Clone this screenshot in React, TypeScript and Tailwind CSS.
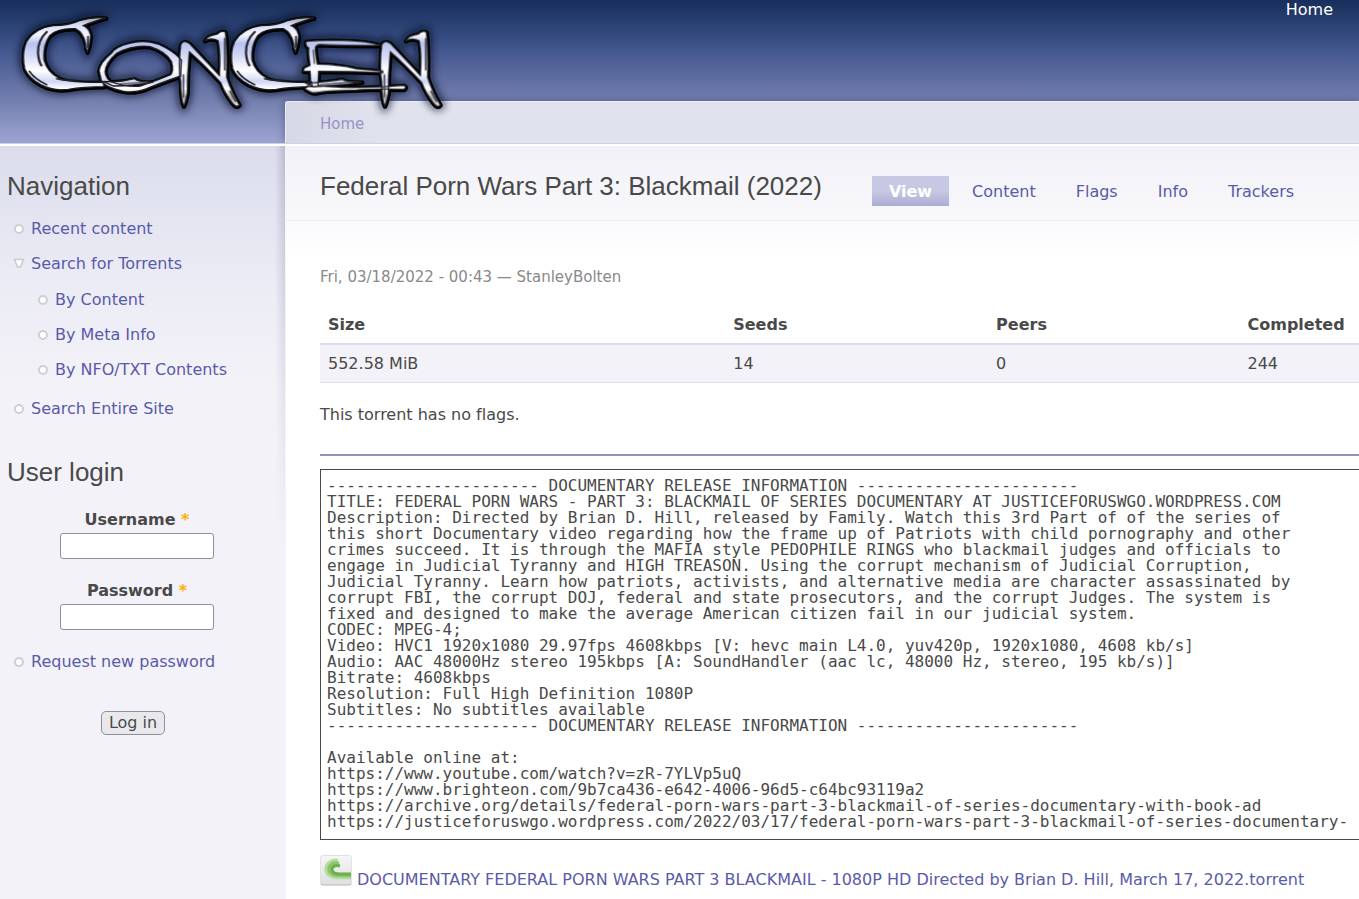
import React from "react";

const RELEASE_NOTES = `---------------------- DOCUMENTARY RELEASE INFORMATION -----------------------
TITLE: FEDERAL PORN WARS - PART 3: BLACKMAIL OF SERIES DOCUMENTARY AT JUSTICEFORUSWGO.WORDPRESS.COM
Description: Directed by Brian D. Hill, released by Family. Watch this 3rd Part of of the series of
this short Documentary video regarding how the frame up of Patriots with child pornography and other
crimes succeed. It is through the MAFIA style PEDOPHILE RINGS who blackmail judges and officials to
engage in Judicial Tyranny and HIGH TREASON. Using the corrupt mechanism of Judicial Corruption,
Judicial Tyranny. Learn how patriots, activists, and alternative media are character assassinated by
corrupt FBI, the corrupt DOJ, federal and state prosecutors, and the corrupt Judges. The system is
fixed and designed to make the average American citizen fail in our judicial system.
CODEC: MPEG-4;
Video: HVC1 1920x1080 29.97fps 4608kbps [V: hevc main L4.0, yuv420p, 1920x1080, 4608 kb/s]
Audio: AAC 48000Hz stereo 195kbps [A: SoundHandler (aac lc, 48000 Hz, stereo, 195 kb/s)]
Bitrate: 4608kbps
Resolution: Full High Definition 1080P
Subtitles: No subtitles available
---------------------- DOCUMENTARY RELEASE INFORMATION -----------------------

Available online at:
https://www.youtube.com/watch?v=zR-7YLVp5uQ
https://www.brighteon.com/9b7ca436-e642-4006-96d5-c64bc93119a2
https://archive.org/details/federal-porn-wars-part-3-blackmail-of-series-documentary-with-book-ad
https://justiceforuswgo.wordpress.com/2022/03/17/federal-porn-wars-part-3-blackmail-of-series-documentary-`;

function Logo() {
  return (
    <svg viewBox="0 0 1380 360" className="h-[120px] w-[460px]" role="img" aria-label="ConCen">
      <defs>
        <path
          id="crescent"
          d="M318 54 Q275 66 250 77 Q268 84 272 108 Q270 135 262 156 Q256 146 256 130 Q250 98 226 86 Q170 84 148 108 Q128 138 132 180 Q142 216 176 234 Q210 250 310 246 L312 260 Q250 260 205 268 Q160 274 122 254 Q86 234 74 206 Q64 160 80 124 Q105 84 160 77 Q210 76 238 62 Q280 50 318 54Z"
        />
        <path
          id="blade"
          d="M542 134 Q550 118 568 130 Q615 180 658 226 Q662 160 654 122 Q634 112 614 122 Q622 106 652 102 Q664 90 676 96 Q682 140 680 232 Q696 280 718 314 Q710 326 696 308 Q674 280 662 248 Q606 188 568 156 Q562 220 562 280 Q556 310 551 318 Q542 300 542 250 Q534 200 542 134Z"
        />
        <g id="mark">
          <use href="#crescent" />
          <path
            fillRule="evenodd"
            d="M297 212 Q300 188 334 160 Q346 140 388 130 Q430 118 474 132 Q520 152 544 180 L542 228 Q480 250 440 266 Q400 280 370 274 Q315 262 304 242Z M315 216 Q316 190 350 160 Q400 134 450 140 Q496 154 514 184 Q522 212 512 224 Q470 242 420 258 Q380 262 330 244 Q318 234 315 216Z"
          />
          <path d="M310 244 Q360 248 404 236 Q410 246 460 246 Q400 258 340 258Z" />
          <use href="#blade" />
          <use href="#crescent" x="624" />
          <path d="M918 124 Q1000 118 1080 124 Q1120 128 1142 136 Q1080 138 960 134 Q944 134 946 150 Q948 172 952 192 Q1010 192 1070 206 L1148 213 L1148 218 Q1040 214 956 214 L954 256 Q1010 264 1080 262 Q1150 262 1212 256 Q1222 260 1212 268 Q1120 266 1070 270 Q980 272 950 278 Q936 282 914 266 L932 250 L930 214 L910 214 L912 204 L930 196 Q924 160 926 144 Q914 136 918 124Z" />
          <path d="M920 250 Q980 246 1028 238 Q1036 246 1086 246 Q1040 254 940 260Z" />
          <use href="#blade" x="603" />
        </g>
        <linearGradient id="chrome" gradientUnits="userSpaceOnUse" x1="0" y1="50" x2="0" y2="320">
          <stop offset="0" stopColor="#999" />
          <stop offset="0.08" stopColor="#d5daf6" />
          <stop offset="0.2" stopColor="#f6f6fb" />
          <stop offset="0.3" stopColor="#b9c3f0" />
          <stop offset="0.44" stopColor="#d5daf6" />
          <stop offset="0.6" stopColor="#ffffff" />
          <stop offset="0.72" stopColor="#d0d7f4" />
          <stop offset="0.8" stopColor="#ffffff" />
          <stop offset="0.9" stopColor="#a9a9ad" />
          <stop offset="1" stopColor="#f2f2f2" />
        </linearGradient>
        <filter id="glow" x="-10%" y="-20%" width="120%" height="140%">
          <feGaussianBlur stdDeviation="12" />
        </filter>
        <filter id="soft" x="-5%" y="-5%" width="110%" height="110%">
          <feGaussianBlur stdDeviation="2.2" />
        </filter>
      </defs>
      <use href="#mark" fill="#060b1c" stroke="#060b1c" strokeWidth="24" opacity="0.75" filter="url(#glow)" />
      <use href="#mark" fill="#000" stroke="#000" strokeWidth="13" strokeLinejoin="round" x="1" y="2" />
      <use href="#mark" fill="url(#chrome)" />
      <g filter="url(#soft)" fill="none" strokeLinecap="round">
        <use href="#mark" fill="none" stroke="#1c1c22" strokeWidth="4" />
        <g id="shade" stroke="#26262c">
          <path d="M140 96 Q112 122 114 160 Q116 184 124 196" strokeWidth="7" />
          <path d="M88 214 Q104 238 140 254" strokeWidth="5" />
          <path d="M170 236 Q194 244 228 240" strokeWidth="5" />
          <path d="M264 110 L263 142" strokeWidth="5" />
        </g>
        <use href="#shade" x="624" />
        <g id="edge" stroke="#4a4a52" strokeWidth="5">
          <path d="M550 225 L550 290 M674 116 L674 210 M690 274 L706 304" />
        </g>
        <use href="#edge" x="603" />
        <path d="M360 252 L440 247 M940 150 L943 190 M962 254 L1050 247" stroke="#4a4a52" strokeWidth="4" />
      </g>
    </svg>
  );
}

function Dot() {
  return <span className="size-[10px] shrink-0 rounded-full border-2 border-[#cfcfd1] bg-white" />;
}

function Triangle() {
  return (
    <svg viewBox="0 0 12 11" className="-ml-px h-[11px] w-3 shrink-0" aria-hidden="true">
      <path d="M1.500 1.500H10.500L7.500 9H4.500Z" fill="#fff" stroke="#cbcbcb" strokeWidth="1.600" strokeLinejoin="round" />
    </svg>
  );
}

function NavLink({ label, open = false }: { label: string; open?: boolean }) {
  return (
    <div className="flex h-[35px] items-center">
      <span className="flex w-[17px] shrink-0 items-center">{open ? <Triangle /> : <Dot />}</span>
      <a href="#" className="whitespace-nowrap text-[#5a5aaa]">
        {label}
      </a>
    </div>
  );
}

function Field({ id, label, type }: { id: string; label: string; type: string }) {
  return (
    <div className="flex flex-col items-center">
      <label htmlFor={id} className="font-bold leading-5">
        {label} <span className="text-[#ffae00]">*</span>
      </label>
      <input
        id={id}
        type={type}
        className="mt-[3px] h-[26px] w-[154px] rounded-[3px] border border-[#8f8f9d] bg-white px-1"
      />
    </div>
  );
}

const HEADING = "font-['Liberation_Sans',sans-serif] text-[26px] leading-8";

function Sidebar() {
  return (
    <aside className="relative w-[285px] shrink-0 bg-[#f3f2f8] bg-[linear-gradient(#dbdceb,#dddfed_20px,#ebebf5_130px,#f3f2f8_240px)] bg-no-repeat pl-[7px] pt-6">
      <div className="absolute right-0 top-0 h-[400px] w-2.5 bg-[linear-gradient(to_right,transparent,#77779a55)] [mask-image:linear-gradient(black,transparent)]" />
      <nav aria-labelledby="nav-title">
        <h2 id="nav-title" className={HEADING}>Navigation</h2>
        <ul className="mt-[9px] pl-[7px]">
          <li><NavLink label="Recent content" /></li>
          <li>
            <NavLink label="Search for Torrents" open />
            <ul className="mb-1 mt-px pl-6">
              <li><NavLink label="By Content" /></li>
              <li><NavLink label="By Meta Info" /></li>
              <li><NavLink label="By NFO/TXT Contents" /></li>
            </ul>
          </li>
          <li><NavLink label="Search Entire Site" /></li>
        </ul>
      </nav>
      <section className="mt-[30px]">
        <h2 className={HEADING}>User login</h2>
        <form onSubmit={(e) => e.preventDefault()}>
          <div className="mt-[22px] flex flex-col gap-[22px] pr-[18px]">
            <Field id="username" label="Username" type="text" />
            <Field id="password" label="Password" type="password" />
          </div>
          <div className="mt-[14px] pl-[7px]">
            <NavLink label="Request new password" />
          </div>
          <div className="mt-8 flex justify-center pr-[26px]">
            <button className="h-6 rounded-[5px] border border-[#8f8f9d] bg-[#e9e9ed] px-[7px] leading-5">Log in</button>
          </div>
        </form>
      </section>
    </aside>
  );
}

const TABS = ["Content", "Flags", "Info", "Trackers"];

function TorrentIcon() {
  return (
    <svg viewBox="0 0 32 32" className="size-8 shrink-0" aria-hidden="true">
      <defs>
        <linearGradient id="tile" x1="0" y1="0" x2="0" y2="1">
          <stop offset="0" stopColor="#f6f6f6" />
          <stop offset="1" stopColor="#e0e0e0" />
        </linearGradient>
      </defs>
      <rect x="0.500" y="1.500" width="31" height="29" rx="2.500" fill="#b5b5b5" />
      <rect x="0.500" y="0.500" width="31" height="28.500" rx="2.500" fill="url(#tile)" stroke="#e2e2e2" />
      <g fill="none">
        <path d="M18 5.500C10.500 4.500 6 9 6 14C6 19.500 11 22.500 17 22.500H31" stroke="#b5dca0" strokeWidth="3.500" />
        <path d="M19 8.500C13 7 9 10 9 14C9 18 13 20.500 18 20.500H31" stroke="#8bc56c" strokeWidth="3.500" />
        <path d="M20 11C15.500 9.500 12 11.500 12 14.500C12 17.500 15 19 20 19H31" stroke="#6bb04a" strokeWidth="3" />
      </g>
    </svg>
  );
}

export default function App() {
  return (
    <div className="flex min-h-screen flex-col overflow-x-hidden bg-white font-['DejaVu_Sans',sans-serif] text-base text-[#494949] [font-variant-ligatures:none]">
      <header className="relative bg-[linear-gradient(#182e5b,#2a4274_25px,#43578f_50px,#6f7bab_96px,#9aa2d0_140px)]">
        <div className="flex h-[101px] justify-end pr-[26px]">
          <a href="#" className="h-5 leading-5 text-white">Home</a>
        </div>
        <div className="flex h-[42px] pl-[285px]">
          <nav
            aria-label="Breadcrumb"
            className="flex-1 rounded-tl-[3px] border-l border-t border-[#ecedf5] bg-[linear-gradient(to_right,#d6d8e5,#e0e2ee_90px)] pl-[34px] pt-3 shadow-[0_0_8px_#2f396688]"
          >
            <a href="#" className="block text-[15px] leading-5 text-[#9791cb]">Home</a>
          </nav>
        </div>
        <a href="#" aria-label="ConCen" className="absolute left-0 top-0 z-10"><Logo /></a>
      </header>
      <div className="relative h-[3px] border-b-2 border-t border-b-white border-t-[#d0d1e0] bg-white" />
      <div className="relative flex flex-1">
        <Sidebar />
        <main className="min-w-0 flex-1 border-l border-[#f4f4f8]">
          <div className="flex h-[75px] items-start whitespace-nowrap border-b border-[#efeff3] bg-[linear-gradient(#f2f1f7,#f8f8fb)] pl-[34px]">
            <h1 className="pt-6 font-['Liberation_Sans',sans-serif] text-[26px] leading-8">
              Federal Porn Wars Part 3: Blackmail (2022)
            </h1>
            <nav aria-label="Torrent" className="ml-[50px] mt-[30px] flex gap-1.5 leading-7">
              <a href="#" aria-current="page" className="bg-[linear-gradient(#c7c8e3_50%,#abacd3)] px-[17px] pt-0.5 font-bold text-white">View</a>
              {TABS.map((tab) => (
                <a key={tab} href="#" className="px-[17px] pt-0.5 text-[#5a5aaa]">{tab}</a>
              ))}
            </nav>
          </div>
          <div className="whitespace-nowrap bg-[linear-gradient(#f9f9fc,#ffffff_36px)] pl-[34px]">
            <p className="pt-[46px] text-[15px] leading-5 text-[#898989]">Fri, 03/18/2022 - 00:43 — StanleyBolten</p>
            <table className="mt-5 w-full table-fixed border-collapse text-left">
              <thead>
                <tr className="h-[37px] border-b-2 border-[#dcdeee]">
                  <th className="w-[39%] pl-2">Size</th>
                  <th className="w-[25.3%] pl-2">Seeds</th>
                  <th className="w-[24.2%] pl-2">Peers</th>
                  <th className="pl-2">Completed</th>
                </tr>
              </thead>
              <tbody>
                <tr className="h-[38px] border-b border-[#dcdeee] bg-[#f3f2f8]">
                  <td className="pl-2 pt-0.5">552.58 MiB</td>
                  <td className="pl-2 pt-0.5">14</td>
                  <td className="pl-2 pt-0.5">0</td>
                  <td className="pl-2 pt-0.5">244</td>
                </tr>
              </tbody>
            </table>
            <p className="mt-[22px] leading-5">This torrent has no flags.</p>
            <hr className="mt-[29px] border-t-2 border-[#9391bb]" />
            <pre className="mt-[13px] overflow-hidden border border-r-0 border-[#494949] px-1.5 pb-[9px] pt-2 font-['DejaVu_Sans_Mono',monospace] text-base leading-4">
              {RELEASE_NOTES}
            </pre>
            <div className="mt-[15px] flex items-start pb-2">
              <TorrentIcon />
              <a href="#" className="ml-[5px] mt-[15px] leading-5 text-[#5a5aaa]">
                DOCUMENTARY FEDERAL PORN WARS PART 3 BLACKMAIL - 1080P HD Directed by Brian D. Hill, March 17, 2022.torrent
              </a>
            </div>
          </div>
        </main>
      </div>
    </div>
  );
}
